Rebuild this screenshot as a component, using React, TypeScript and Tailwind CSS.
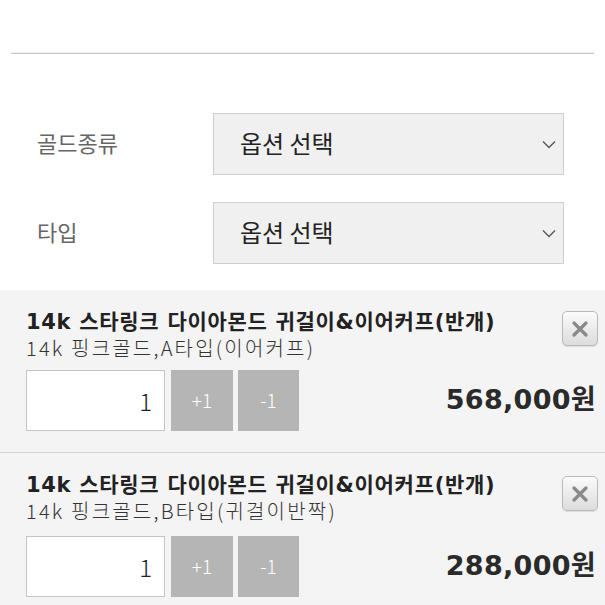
import React from "react";

const FONT = { fontFamily: '"Noto Sans CJK KR", "Noto Sans", sans-serif' };
const WIDE = { fontFamily: '"DejaVu Sans", "Noto Sans CJK KR", sans-serif' };

function Chevron() {
  return (
    <svg width="14" height="9" viewBox="0 0 14 9" fill="none">
      <path d="M1 1.5 L7 7.5 L13 1.5" stroke="#555" strokeWidth="1.3" />
    </svg>
  );
}

function SelectRow({ label }: { label: string }) {
  return (
    <div className="flex items-center">
      <div className="w-[213px] pl-[37px] text-[22px] text-[#666] leading-none -mt-[4px]">{label}</div>
      <div className="w-[351px] h-[62px] bg-[#f0f0f0] border border-[#cfcfcf] flex items-center pl-[26px] pr-[7px]">
        <span className="text-[24px] text-[#222] leading-none -mt-[3px]">옵션 선택</span>
        <span className="ml-auto flex items-center">
          <Chevron />
        </span>
      </div>
    </div>
  );
}

function CloseBtn() {
  return (
    <div className="w-[36px] h-[35px] rounded-[5px] border border-[#b8b8b8] bg-gradient-to-b from-[#fbfbfb] to-[#dcdcdc] flex items-center justify-center shadow-[0_1px_1px_rgba(0,0,0,0.1)]">
      <svg width="18" height="18" viewBox="0 0 18 18">
        <path d="M3 3 L15 15 M15 3 L3 15" stroke="#8a8a8a" strokeWidth="3.2" strokeLinecap="round" />
      </svg>
    </div>
  );
}

function Item({ option, price, second }: { option: string; price: string; second?: boolean }) {
  return (
    <div className="relative bg-[#f4f4f4] pl-[26px] pt-[20px] pb-[21px]">
      <div className={second ? "absolute top-[23px] right-[7px]" : "absolute top-[21px] right-[7px]"}>
        <CloseBtn />
      </div>
      <div className="text-[21px] font-bold text-[#222] leading-[25px] tracking-[0.7px]" style={WIDE}>
        14k 스타링크 다이아몬드 귀걸이&amp;이어커프(반개)
      </div>
      <div className="text-[20px] font-light text-[#333] leading-[25px] tracking-[2.2px]">{option}</div>
      <div className={second ? "flex items-center mt-[13px]" : "flex items-center mt-[10px]"}>
        <div className="w-[139px] h-[61px] bg-white border border-[#c4c4c4] flex items-center justify-end pr-[12px] text-[24px] font-light text-[#222]">
          1
        </div>
        <div className="ml-[6px] w-[62px] h-[61px] bg-[#b5b5b5] flex items-center justify-center text-white text-[19px] font-light">
          +1
        </div>
        <div className="ml-[5px] w-[61px] h-[61px] bg-[#b5b5b5] flex items-center justify-center text-white text-[19px] font-light">
          -1
        </div>
        <div className="ml-auto pr-[9px] text-[27px] font-bold text-[#2a2a2a] tracking-[0.3px]" style={WIDE}>
          {price}
        </div>
      </div>
    </div>
  );
}

export default function App() {
  return (
    <div className="w-[605px] h-[605px] bg-white overflow-hidden" style={FONT}>
      <div className="h-[52px]" />
      <div className="mx-[11px] h-[1px] bg-[#f0f0f0]" />
      <div className="mx-[11px] h-[1px] bg-[#c8c8c8]" />
      <div className="mt-[59px] flex flex-col gap-[27px]">
        <SelectRow label="골드종류" />
        <SelectRow label="타입" />
      </div>
      <div className="mt-[26px]">
        <Item option="14k 핑크골드,A타입(이어커프)" price="568,000원" />
        <div className="h-[1px] bg-[#d4d4d4]" />
        <Item option="14k 핑크골드,B타입(귀걸이반짝)" price="288,000원" second />
      </div>
    </div>
  );
}
